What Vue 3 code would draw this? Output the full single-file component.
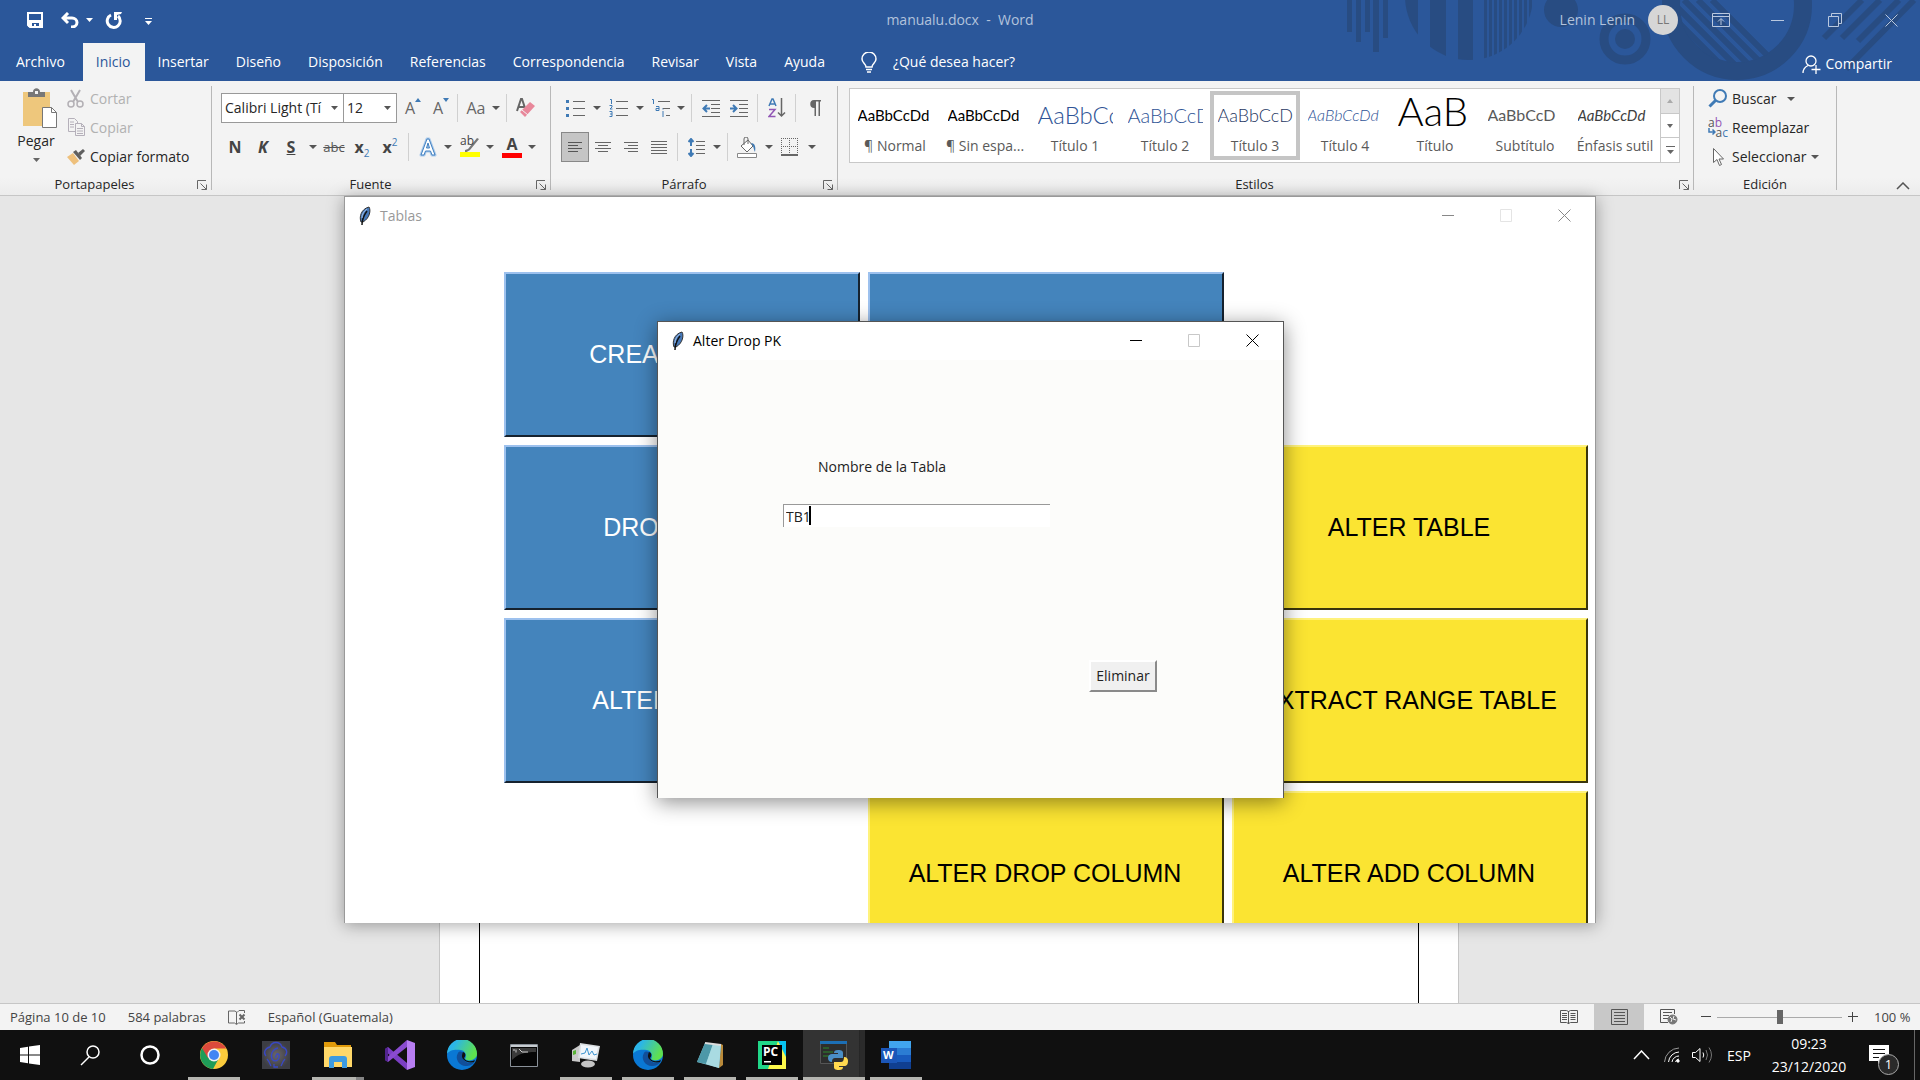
<script setup>
import { ref } from 'vue'

const tabs = ['Archivo', 'Inicio', 'Insertar', 'Diseño', 'Disposición', 'Referencias', 'Correspondencia', 'Revisar', 'Vista', 'Ayuda']
const activeTab = ref('Inicio')

const styles = [
  { name: '¶ Normal', sample: 'AaBbCcDd', cls: 'normal' },
  { name: '¶ Sin espa...', sample: 'AaBbCcDd', cls: 'normal' },
  { name: 'Título 1', sample: 'AaBbCcDd', cls: 'h1' },
  { name: 'Título 2', sample: 'AaBbCcDd', cls: 'h2' },
  { name: 'Título 3', sample: 'AaBbCcDd', cls: 'h3' },
  { name: 'Título 4', sample: 'AaBbCcDd', cls: 'h4' },
  { name: 'Título', sample: 'AaB', cls: 'title' },
  { name: 'Subtítulo', sample: 'AaBbCcD', cls: 'subtitle' },
  { name: 'Énfasis sutil', sample: 'AaBbCcDd', cls: 'emphasis' }
]
const activeStyle = ref('Título 3')

const tiles = [
  { label: 'CREATE TABLE', cls: 'blue c1 r1' },
  { label: '', cls: 'blue c2 r1' },
  { label: 'DROP TABLE', cls: 'blue c1 r2' },
  { label: 'ALTER TABLE', cls: 'yellow c3 r2' },
  { label: 'ALTER ADD PK', cls: 'blue c1 r3' },
  { label: 'EXTRACT RANGE TABLE', cls: 'yellow c3 r3' },
  { label: 'ALTER DROP COLUMN', cls: 'yellow c2 r4' },
  { label: 'ALTER ADD COLUMN', cls: 'yellow c3 r4' }
]

const stripes = Array.from({ length: 10 }, (_, i) => 144 + i * 5)
const table = ref('TB1')
const zoom = ref(50)
</script>

<template>
  <div class="screen">
    <header class="head">
      <svg class="deco" width="580" height="81" viewBox="0 0 580 81" fill="#284c82" aria-hidden="true">
        <defs>
          <clipPath id="disc"><circle cx="129" cy="-4" r="64" /></clipPath>
          <clipPath id="hole"><circle cx="397" cy="5" r="58" /></clipPath>
        </defs>
        <path d="M7 0h5v32h-5zM16 0h5v42h-5zM25 0h5v32h-5zM33 0h6v52h-6zM43 0h5v38h-5z" />
        <g clip-path="url(#disc)">
          <path d="M60 0h18v64h-18zM90 0h16v64h-16zM118 0h15v64h-15z" />
          <rect v-for="x in stripes" :key="x" :x="x" y="0" width="3" height="64" />
        </g>
        <circle cx="221" cy="10" r="17" />
        <circle cx="285" cy="39" r="21" fill="none" stroke="#284c82" stroke-width="9" />
        <circle cx="285" cy="39" r="10" />
        <circle cx="397" cy="5" r="66" fill="none" stroke="#284c82" stroke-width="18" />
        <g clip-path="url(#hole)" stroke="#284c82" stroke-width="6">
          <path d="M330 0l80 80M344 0l80 80M358 0l80 80M372 0l80 80M316 0l80 80" />
        </g>
        <path d="M484 38L522 0M502 38L540 0M518 41L559 0M506 69L574 0" stroke="#284c82" stroke-width="6" />
      </svg>

      <div class="titlebar">
        <div class="quick">
          <button aria-label="Guardar"><svg width="16" height="16" viewBox="0 0 16 16"><path d="M1 1h14v14H3l-2-2z" fill="none" stroke="#fff" stroke-width="2" /><path d="M1 8h14v7h-3v-4H5v4H1z" fill="#fff" /><path d="M7 12h2v3H7z" fill="#fff" /></svg></button>
          <button aria-label="Deshacer"><svg width="18" height="16" viewBox="0 0 18 16"><path d="M7 1L2 6l5 5M3 6h8a5 4.5 0 0 1 0 9h-1" fill="none" stroke="#fff" stroke-width="3" /></svg></button>
          <svg class="drop" width="7" height="4" viewBox="0 0 7 4"><path d="M0 0h7L3.5 4z" fill="#fff" /></svg>
          <button aria-label="Rehacer"><svg width="18" height="17" viewBox="0 0 18 17"><path d="M6 3a6.500 6.500 0 1 0 7 1" fill="none" stroke="#fff" stroke-width="3" /><path d="M9 0h8l-1 2-4 1v5H9z" fill="#fff" /></svg></button>
          <button class="custom" aria-label="Personalizar"><svg width="7" height="7" viewBox="0 0 7 7" fill="#fff"><path d="M0 0h7v1H0zM0 3h7L3.5 7z" /></svg></button>
        </div>
        <div class="doc-name">manualu.docx&nbsp; -&nbsp; Word</div>
        <div class="account">
          <span>Lenin Lenin</span>
          <span class="avatar">LL</span>
          <button class="wc" aria-label="Opciones de la cinta"><svg width="18" height="14" viewBox="0 0 18 14" fill="none" stroke="#b9c8df"><path d="M.5.5h17v13H.5zM.5 3.5h17M9 12V6M6 8.500l3-3 3 3" /></svg></button>
          <button class="wc" aria-label="Minimizar"><svg width="13" height="13" viewBox="0 0 13 13" stroke="#b9c8df"><path d="M0 6.500h13" /></svg></button>
          <button class="wc" aria-label="Restaurar"><svg width="14" height="14" viewBox="0 0 14 14" fill="none" stroke="#b9c8df"><path d="M.5 3.500h10v10H.5zM3.500 3.500v-3h10v10h-3" /></svg></button>
          <button class="wc" aria-label="Cerrar"><svg width="13" height="13" viewBox="0 0 13 13" stroke="#b9c8df"><path d="M.5.5l12 12M12.500.5l-12 12" /></svg></button>
        </div>
      </div>

      <nav class="tabs">
        <button v-for="t in tabs" :key="t" :class="{ on: t === activeTab }" @click="activeTab = t">{{ t }}</button>
        <button class="tell">
          <svg width="16" height="21" viewBox="0 0 16 21" fill="none" stroke="#fff" stroke-width="1.5"><path d="M5 15c0-3-4-4-4-8a7 7 0 0 1 14 0c0 4-4 5-4 8zM5 17.500h6M6 20h4" /></svg>
          ¿Qué desea hacer?
        </button>
        <button class="share">
          <svg width="19" height="19" viewBox="0 0 19 19" fill="none" stroke="#fff" stroke-width="1.3"><circle cx="9" cy="6" r="5" /><path d="M1 18c0-4 2-6 5-7.500M14 10v9M9.500 14.500h9" /></svg>
          Compartir
        </button>
      </nav>
    </header>

    <section class="ribbon">
      <div class="group clip">
        <div class="body">
          <button class="paste">
            <svg class="board" width="36" height="40" viewBox="0 0 36 40"><path d="M1 4h27v34H1z" fill="#eec77c" /><path d="M6 9V4h5c0-5 7-5 7 0h5v5z" fill="#777" /><path d="M13 3h3v3h-3z" fill="#f3f3f3" /><path d="M20.500 19.500h9l5 5v15h-14z" fill="#fff" stroke="#777" /><path d="M29.500 19.500v5h5" fill="none" stroke="#777" /></svg>
            <span>Pegar</span>
            <svg width="7" height="4" viewBox="0 0 7 4"><path d="M0 0h7L3.5 4z" fill="#666" /></svg>
          </button>
          <div class="stack">
            <button class="off"><svg width="18" height="19" viewBox="0 0 18 19" fill="none" stroke="#b3b0b5" stroke-width="2"><path d="M4 1l7 12M13 1L6 13" /><circle cx="4" cy="15" r="3" stroke-width="1.5" /><circle cx="13" cy="15" r="3" stroke-width="1.5" /></svg>Cortar</button>
            <button class="off"><svg width="18" height="19" viewBox="0 0 18 19" fill="#f3f3f3" stroke="#b5b0ba"><path d="M1.500.5h6l3 3v10h-9zM3 4h4M3 6.500h4M3 9h4" /><path d="M8.500 5.500h6l3 3v9h-9zM14.500 5.500v3h3M10 10.500h6M10 13h6M10 15.500h6" /></svg>Copiar</button>
            <button><svg width="18" height="18" viewBox="0 0 18 18"><path d="M0 9l6-4 6 8-5 4z" fill="#eec07c" /><path d="M6 4l3-2 6 8-2 2z" fill="#5f5f5f" /><path d="M11 5l5-4 2 2-5 5z" fill="#5f5f5f" /></svg>Copiar formato</button>
          </div>
        </div>
        <div class="caption"><span>Portapapeles</span><svg class="launch" width="10" height="10" viewBox="0 0 10 10" fill="none" stroke="#666"><path d="M.5 9V.5H9M3.500 3.500l6 6M9.500 4.500v5h-5" /></svg></div>
      </div>

      <div class="group font">
        <div class="body rows">
          <div class="row">
            <label class="combo wide"><select aria-label="Fuente"><option>Calibri Light (Tí</option></select><svg width="7" height="4" viewBox="0 0 7 4"><path d="M0 0h7L3.5 4z" fill="#555" /></svg></label>
            <label class="combo"><select aria-label="Tamaño"><option>12</option></select><svg width="7" height="4" viewBox="0 0 7 4"><path d="M0 0h7L3.5 4z" fill="#555" /></svg></label>
            <button class="ib first" aria-label="Agrandar"><span class="g">A</span><svg class="sup" width="6" height="4" viewBox="0 0 6 4"><path d="M0 4h6L3 0z" fill="#3f7ab5" /></svg></button>
            <button class="ib" aria-label="Reducir"><span class="g">A</span><svg class="sup" width="6" height="4" viewBox="0 0 6 4"><path d="M0 0h6L3 4z" fill="#3f7ab5" /></svg></button>
            <i class="sep tight"></i>
            <button class="ib"><span class="g">Aa</span></button><i class="dd"></i>
            <i class="sep"></i>
            <button class="ib" aria-label="Borrar formato"><svg width="20" height="20" viewBox="0 0 20 20"><path d="M1 13L5 1h1l4 12M2.500 9h6" fill="none" stroke="#666" stroke-width="2" /><path d="M4 14L14 4l5 4L9 19z" fill="#e8879a" /><path d="M6 12l6 5" stroke="#f3f3f3" /></svg></button>
          </div>
          <div class="row">
            <button class="ib"><b>N</b></button>
            <button class="ib"><b><em>K</em></b></button>
            <button class="ib"><b><u>S</u></b></button><i class="dd big"></i>
            <button class="ib"><s>abc</s></button>
            <button class="ib"><b>x</b><sub>2</sub></button>
            <button class="ib"><b>x</b><sup>2</sup></button>
            <i class="sep"></i>
            <button class="ib" aria-label="Efectos de texto"><svg width="18" height="20" viewBox="0 0 18 20" fill="none" stroke-linejoin="round"><path d="M2 18L8 2h2l6 16h-3l-1.500-4h-5L5 18zM7.500 11h3L9 6z" stroke="#a9c9ea" stroke-width="3" /><path d="M2 18L8 2h2l6 16h-3l-1.500-4h-5L5 18zM7.500 11h3L9 6z" fill="#fff" stroke="#3f7fc0" /></svg></button><i class="dd"></i>
            <button class="ib hl" aria-label="Resaltado"><span>ab</span><svg width="20" height="20" viewBox="0 0 20 20"><path d="M5 13l3-1L17 1l2 1-9 11-5 3z" fill="#777" /><path d="M0 15h20v5H0z" fill="#ff0" /></svg></button><i class="dd"></i>
            <button class="ib col"><b>A</b><span class="red"></span></button><i class="dd"></i>
          </div>
        </div>
        <div class="caption"><span>Fuente</span><svg class="launch" width="10" height="10" viewBox="0 0 10 10" fill="none" stroke="#666"><path d="M.5 9V.5H9M3.500 3.500l6 6M9.500 4.500v5h-5" /></svg></div>
      </div>

      <div class="group para">
        <div class="body rows">
          <div class="row">
            <button class="ib" aria-label="Viñetas"><svg width="19" height="18" viewBox="0 0 19 18"><path d="M0 1h3v3H0zM0 8h3v3H0zM0 15h3v3H0z" fill="#3f7ab5" /><path d="M7 2h12v1H7zM7 9h12v1H7zM7 16h12v1H7z" fill="#666" /></svg></button><i class="dd big"></i>
            <button class="ib" aria-label="Numeración"><svg width="19" height="18" viewBox="0 0 19 18"><path d="M1 .5h1.500V5M.5 6.500h2.500v1.500l-2 2h2.500M.5 12.500H3v5H.5M1 15h2" fill="none" stroke="#3f7ab5" /><path d="M7 2h12v1H7zM7 9h12v1H7zM7 16h12v1H7z" fill="#666" /></svg></button><i class="dd big"></i>
            <button class="ib" aria-label="Multinivel"><svg width="20" height="18" viewBox="0 0 20 18"><path d="M1 .5h1.500V5M5 7.500h3v4H5v-2h3M12 12v6M12 9v1.500" fill="none" stroke="#3f7ab5" /><path d="M7 2h12v1H7zM12 9h7v1h-7zM15 16h4v1h-4z" fill="#666" /></svg></button><i class="dd"></i>
            <i class="sep"></i>
            <button class="ib" aria-label="Disminuir sangría"><svg width="18" height="17" viewBox="0 0 18 17"><path d="M0 0h18v1H0zM9 4h9v1H9zM9 8h9v1H9zM9 12h9v1H9zM0 16h18v1H0z" fill="#666" /><path d="M8 8.500H2M5 5L1.500 8.500 5 12" fill="none" stroke="#3f7ab5" stroke-width="2" /></svg></button>
            <button class="ib" aria-label="Aumentar sangría"><svg width="18" height="17" viewBox="0 0 18 17"><path d="M0 0h18v1H0zM9 4h9v1H9zM9 8h9v1H9zM9 12h9v1H9zM0 16h18v1H0z" fill="#666" /><path d="M0 8.500h6M3 5l3.500 3.500L3 12" fill="none" stroke="#3f7ab5" stroke-width="2" /></svg></button>
            <i class="sep"></i>
            <button class="ib" aria-label="Ordenar"><svg width="18" height="20" viewBox="0 0 18 20" fill="none"><path d="M1 8L4 1h1l3 7M2 6h5" stroke="#3f7ab5" stroke-width="1.5" /><path d="M1 11.500h6L1 18.500h6.500" stroke="#9156b5" stroke-width="1.5" /><path d="M13.500 0v18M10 14.500l3.500 3.500 3.500-3.500" stroke="#666" stroke-width="1.5" /></svg></button>
            <i class="sep"></i>
            <button class="ib" aria-label="Mostrar todo"><svg width="12" height="16" viewBox="0 0 12 16"><path d="M5 0h7v1.500h-1V16H9.500V1.500H7V16H5.500V8a4 4 0 0 1-.5-8z" fill="#666" /></svg></button>
          </div>
          <div class="row">
            <button class="ib pressed" aria-label="Izquierda"><svg width="16" height="13" viewBox="0 0 16 13"><path d="M1 1.500h14M1 4.500h10M1 7.500h14M1 10.500h10" stroke="#555" /></svg></button>
            <button class="ib" aria-label="Centrar"><svg width="16" height="13" viewBox="0 0 16 13"><path d="M0 1.500h16M3 4.500h10M0 7.500h16M3 10.500h10" stroke="#666" /></svg></button>
            <button class="ib" aria-label="Derecha"><svg width="16" height="13" viewBox="0 0 16 13"><path d="M1 1.500h14M5 4.500h10M1 7.500h14M5 10.500h10" stroke="#666" /></svg></button>
            <button class="ib" aria-label="Justificar"><svg width="16" height="15" viewBox="0 0 16 15"><path d="M0 1.500h16M0 4.500h16M0 7.500h16M0 10.500h16M0 13.500h16" stroke="#666" /></svg></button>
            <i class="sep"></i>
            <button class="ib" aria-label="Interlineado"><svg width="18" height="19" viewBox="0 0 18 19" fill="none"><path d="M3 1v7M.5 4L3 1l2.500 3M3 11v7M.5 15L3 18l2.500-3" stroke="#3f7ab5" stroke-width="2" /><path d="M8 3.500h9M8 7.500h9M8 11.500h9M8 15.500h9" stroke="#666" /></svg></button><i class="dd"></i>
            <i class="sep"></i>
            <button class="ib" aria-label="Sombreado"><svg width="20" height="21" viewBox="0 0 20 21"><path d="M.5 16.500h19v4H.5z" fill="#fff" stroke="#888" /><path d="M4 9l7-6 5 6-6 6z" fill="#fff" stroke="#666" /><path d="M7 8V2a2 2 0 0 1 4 0v5" fill="none" stroke="#666" /><path d="M14 6c4 0 5 4 4 9-1-2-1-3-2-6z" fill="#3f7ab5" /></svg></button><i class="dd big"></i>
            <button class="ib" aria-label="Bordes"><svg width="18" height="18" viewBox="0 0 18 18" fill="none" stroke="#666"><path d="M.5 0v17M8.500 0v17M16.500 0v17M0 .5h17M0 8.500h17" stroke-dasharray="1 1" /><path d="M0 17h17" stroke-width="2" /></svg></button><i class="dd big"></i>
          </div>
        </div>
        <div class="caption"><span>Párrafo</span><svg class="launch" width="10" height="10" viewBox="0 0 10 10" fill="none" stroke="#666"><path d="M.5 9V.5H9M3.500 3.500l6 6M9.500 4.500v5h-5" /></svg></div>
      </div>

      <div class="group styles">
        <div class="body">
          <div class="gallery">
            <button v-for="s in styles" :key="s.name" :class="['style', { on: s.name === activeStyle }]" @click="activeStyle = s.name">
              <span :class="['sample', s.cls]">{{ s.sample }}</span>
              <span class="name">{{ s.name }}</span>
            </button>
            <div class="scroll">
              <button class="dim" aria-label="Arriba"><svg width="6" height="4" viewBox="0 0 6 4"><path d="M0 4h6L3 0z" fill="#aaa" /></svg></button>
              <button aria-label="Abajo"><svg width="6" height="4" viewBox="0 0 6 4"><path d="M0 0h6L3 4z" fill="#666" /></svg></button>
              <button aria-label="Más"><svg width="9" height="9" viewBox="0 0 9 9" fill="#666"><path d="M0 0h9v1H0zM1 4h7L4.500 8z" /></svg></button>
            </div>
          </div>
        </div>
        <div class="caption"><span>Estilos</span><svg class="launch" width="10" height="10" viewBox="0 0 10 10" fill="none" stroke="#666"><path d="M.5 9V.5H9M3.500 3.500l6 6M9.500 4.500v5h-5" /></svg></div>
      </div>

      <div class="group edit">
        <div class="body">
          <div class="stack">
            <button><svg width="20" height="19" viewBox="0 0 20 19" fill="none" stroke="#3f7ab5"><circle cx="12" cy="7" r="6" stroke-width="2" /><path d="M7.500 11.500L1.500 17.500" stroke-width="3" /></svg>Buscar<i class="dd find"></i></button>
            <button><span class="swap"><span>a<span class="p">b</span></span><span><svg width="8" height="8" viewBox="0 0 8 8" fill="none" stroke="#3f7ab5" stroke-width="1.5"><path d="M1 0v4h6M4.500 1.500L7 4 4.500 6.500" /></svg>a<span class="c">c</span></span></span>Reemplazar</button>
            <button><svg width="20" height="19" viewBox="0 0 20 19" fill="#fff" stroke="#666"><path d="M5.500 1.500v14l3.500-3 2.500 6 2-1-2.500-5.500h4.500z" /></svg>Seleccionar<i class="dd"></i></button>
          </div>
        </div>
        <div class="caption"><span>Edición</span></div>
      </div>

      <button class="collapse" aria-label="Contraer la cinta"><svg width="14" height="8" viewBox="0 0 14 8" fill="none" stroke="#555" stroke-width="1.5"><path d="M1 7l6-6 6 6" /></svg></button>
    </section>

    <main class="desk">
      <div class="page"><div class="frame"><i class="pic b"></i><i class="pic y"></i></div></div>

      <section class="win tablas">
        <div class="bar">
          <svg class="feather" width="12" height="20" viewBox="0 0 12 20"><path d="M2 16C0 11 2 3 10 1c2 3 1 11-6 15z" fill="#4678b8" stroke="#333" /><path d="M3 19c0-6 2-10 5-14" fill="none" stroke="#111" stroke-width="1.5" /><path d="M3 12c0-4 2-7 5-9" fill="none" stroke="#9dbde8" /></svg>
          <span>Tablas</span>
          <button aria-label="Minimizar"><svg width="13" height="13" viewBox="0 0 13 13" stroke="#888"><path d="M0 6.500h12" /></svg></button>
          <button aria-label="Maximizar"><svg width="13" height="13" viewBox="0 0 13 13" fill="none" stroke="#e4e4e4"><path d="M.5.5h11v12H.5z" /></svg></button>
          <button aria-label="Cerrar"><svg width="13" height="13" viewBox="0 0 13 13" stroke="#888"><path d="M.5.5l12 12M12.500.5l-12 12" /></svg></button>
        </div>
        <div class="grid">
          <button v-for="(t, i) in tiles" :key="i" :class="['tile', t.cls]">{{ t.label }}</button>
        </div>
      </section>

      <section class="win dialog">
        <div class="bar">
          <svg class="feather" width="12" height="20" viewBox="0 0 12 20"><path d="M2 16C0 11 2 3 10 1c2 3 1 11-6 15z" fill="#4678b8" stroke="#333" /><path d="M3 19c0-6 2-10 5-14" fill="none" stroke="#111" stroke-width="1.5" /><path d="M3 12c0-4 2-7 5-9" fill="none" stroke="#9dbde8" /></svg>
          <span>Alter Drop PK</span>
          <button aria-label="Minimizar"><svg width="13" height="13" viewBox="0 0 13 13" stroke="#000"><path d="M0 6.500h12" /></svg></button>
          <button aria-label="Maximizar"><svg width="13" height="13" viewBox="0 0 13 13" fill="none" stroke="#c8c8c8"><path d="M.5.5h11v12H.5z" /></svg></button>
          <button aria-label="Cerrar"><svg width="13" height="13" viewBox="0 0 13 13" stroke="#000"><path d="M.5.5l12 12M12.500.5l-12 12" /></svg></button>
        </div>
        <form class="form" @submit.prevent>
          <label for="tabla">Nombre de la Tabla</label>
          <div class="entry"><input id="tabla" v-model="table" type="text" /><i class="cursor"></i></div>
          <button class="drop-btn" type="submit">Eliminar</button>
        </form>
      </section>
    </main>

    <footer class="status">
      <span>Página 10 de 10</span>
      <span>584 palabras</span>
      <svg width="18" height="16" viewBox="0 0 18 16" fill="none" stroke="#666"><path d="M16.500 4V1.500H11l-2 2-2-1.500H.5v12h6l2 1.500 2-1.500h6V12M8.500 3v12" /><path d="M11.500 5.500l5 5M16.500 5.500l-5 5" stroke-width="2" /></svg>
      <span>Español (Guatemala)</span>
      <div class="views">
        <button aria-label="Modo de lectura"><svg width="18" height="16" viewBox="0 0 18 16" fill="none" stroke="#555"><path d="M.5 1.500h6l2 1 2-1h7v12h-7l-2 1-2-1h-6zM8.500 2v13M2 4.500h5M2 6.500h5M2 8.500h5M2 10.500h5M10.500 4.500h5M10.500 6.500h5M10.500 8.500h5M10.500 10.500h5" /></svg></button>
        <button class="on" aria-label="Diseño de impresión"><svg width="17" height="16" viewBox="0 0 17 16" fill="none" stroke="#555"><path d="M.5.5h16v15H.5zM3 3.500h11M3 6.500h11M3 9.500h11M3 12.500h11" /></svg></button>
        <button aria-label="Diseño web"><svg width="18" height="16" viewBox="0 0 18 16" fill="none" stroke="#555"><path d="M8 13.500H.5V.5h14V5M3 3.500h9M3 6.500h6M3 9.500h5" /><circle cx="12.500" cy="10.500" r="4.500" fill="#777" stroke="#777" /><path d="M10 8l2 2-1 3M14 7l-1 3 3 1" stroke="#eee" /></svg></button>
        <div class="zoom-box">
          <button aria-label="Alejar"><svg width="10" height="10" viewBox="0 0 10 10" stroke="#444"><path d="M0 4.500h10" /></svg></button>
          <input v-model="zoom" class="zoom" type="range" min="0" max="100" aria-label="Zoom" />
          <button aria-label="Acercar"><svg width="10" height="10" viewBox="0 0 10 10" stroke="#444"><path d="M0 4.500h10M4.500 0v10" /></svg></button>
          <span class="pct">100 %</span>
        </div>
      </div>
    </footer>

    <nav class="taskbar">
      <button class="sys" aria-label="Inicio"><svg width="20" height="20" viewBox="0 0 20 20" fill="#fff"><path d="M0 3l8-1.200V9.500H0zM9 1.600L20 0v9.500H9zM0 10.500h8v7.700L0 17zM9 10.500h11V20L9 18.400z" /></svg></button>
      <button class="sys" aria-label="Buscar"><svg width="21" height="21" viewBox="0 0 21 21" fill="none" stroke="#fff" stroke-width="1.5"><circle cx="13" cy="7" r="6" /><path d="M9 12L1 20" /></svg></button>
      <button class="sys" aria-label="Cortana"><svg width="20" height="20" viewBox="0 0 20 20"><circle cx="10" cy="10" r="8.5" fill="none" stroke="#fff" stroke-width="2.5" /></svg></button>

      <button class="app run" aria-label="Chrome"><svg width="28" height="28" viewBox="0 0 28 28"><circle cx="14" cy="14" r="14" fill="#fbcb3c" /><path d="M2 7a14 14 0 0 0 11 21l6-11-5-3z" fill="#1f9d58" /><path d="M2 7l6 10 6-9.500h12.200A14 14 0 0 0 2 7z" fill="#dc4a3c" /><circle cx="14" cy="14" r="6.5" fill="#f1f1f1" /><circle cx="14" cy="14" r="5" fill="#4285f4" /></svg></button>
      <button class="app" aria-label="Dragon"><svg width="28" height="28" viewBox="0 0 28 28"><defs><radialGradient id="dg"><stop offset="0" stop-color="#6a6668" /><stop offset="1" stop-color="#3c3d44" /></radialGradient></defs><path d="M0 0h28v28H0z" fill="url(#dg)" /><path d="M16 7c-5 1-8 6-6 11 3 4 8 1 7-4-1-3-4 0-3 3M8 6c2-6 10-6 12 0 5 1 6 6 3 9M8 6c-5 1-7 6-4 9M5 18c2 2 3 5 4 7M23 18c-2 2-3 5-4 7M12 23v3h4" fill="none" stroke="#3948c4" stroke-width="1.3" /></svg></button>
      <button class="app run multi" aria-label="Explorador"><svg width="28" height="26" viewBox="0 0 28 26"><path d="M0 0h11l2 3h14v7H0z" fill="#e09a0a" /><path d="M0 5h28v20H0z" fill="#ffd869" /><path d="M5 26v-9q0-3 3-3h12q3 0 3 3v9h-5v-6h-8v6z" fill="#3d9be0" /></svg></button>
      <button class="app" aria-label="Visual Studio"><svg width="30" height="30" viewBox="0 0 30 30"><path d="M0 9l3-2 19 16v7L0 11z" fill="#7b3fc4" /><path d="M0 20l3 2L22 7V0L0 19z" fill="#8a4bd0" /><path d="M22 0l8 3v24l-8 3z" fill="#b77df2" /><path d="M0 9v11l3 2V7z" fill="#52248f" /></svg></button>
      <button class="app" aria-label="Edge"><svg width="30" height="30" viewBox="0 0 30 30"><defs><linearGradient id="eg" x1="0" x2="1" y2=".4"><stop offset=".3" stop-color="#2bb5e8" /><stop offset="1" stop-color="#5fe04f" /></linearGradient></defs><circle cx="15" cy="15" r="15" fill="#0a78d4" /><path d="M0 14A15 15 0 0 1 30 14c0 6-9 8-12 5 2-3 1-8-4-9-6-1-12 0-14 4z" fill="url(#eg)" /><path d="M11 13c-4 6 2 14 9 13 4 0 7-3 8-5-4 3-10 2-12-2-1-2 1-3 1-5-1-3-5-3-6-1z" fill="#114f9a" /><path d="M16 12c3 1 3 4 1 6 2 4 7 4 11 2l-1 2c-4 1-8 0-10-2-3-3-2-5-1-8z" fill="#101010" /></svg></button>
      <button class="app" aria-label="Consola"><svg width="28" height="23" viewBox="0 0 28 23"><path d="M.5.5h27v22H.5z" fill="#060606" stroke="#8a9199" /><path d="M1 1h26v2H1z" fill="#c7ccd1" /><path d="M2 4h24v4C14 8 8 10 2 16z" fill="#3a3a3a" /><path d="M3 6h2M6 5.500v3M9 5l3 3h6" fill="none" stroke="#ccc" /></svg></button>
      <button class="app run" aria-label="Monitor"><svg width="28" height="26" viewBox="0 0 28 26"><path d="M0 8l8-5v17l-8-1z" fill="#c9c9c9" /><path d="M1 9l3-1v4l-3 1z" fill="#58b336" /><path d="M8 1l20 3-3 15-19-3z" fill="#d9dde0" /><path d="M9 3l17 2-2 12-16-2z" fill="#f1f6fb" /><path d="M9 12l4-1 2-5 2 7 3-4 2 4 3-1" fill="none" stroke="#3d94cf" /><ellipse cx="16" cy="22" rx="7" ry="3.5" fill="#c5c5c5" /></svg></button>
      <button class="app run" aria-label="Edge Beta"><svg width="30" height="30" viewBox="0 0 30 30"><circle cx="15" cy="15" r="15" fill="#0a78d4" /><path d="M0 14A15 15 0 0 1 30 14c0 6-9 8-12 5 2-3 1-8-4-9-6-1-12 0-14 4z" fill="url(#eg)" /><path d="M11 13c-4 6 2 14 9 13 4 0 7-3 8-5-4 3-10 2-12-2-1-2 1-3 1-5-1-3-5-3-6-1z" fill="#114f9a" /><path d="M16 12c3 1 3 4 1 6 2 4 7 4 11 2l-1 2c-4 1-8 0-10-2-3-3-2-5-1-8z" fill="#101010" /></svg></button>
      <button class="app run" aria-label="Bloc de notas"><svg width="28" height="27" viewBox="0 0 28 27"><path d="M25 2l2 1v20l-4 3z" fill="#b98a3a" /><path d="M9 1l16 2-2 23-22-6z" fill="#8fcbd6" /><path d="M9 1L1 20l9 2L17 2z" fill="#4d98a8" /><path d="M17 2l-7 20 13 4 2-23z" fill="#a9dbe2" /><path d="M9 1l16 2" stroke="#ddd" stroke-width="2" /></svg></button>
      <button class="app run" aria-label="PyCharm"><svg width="28" height="28" viewBox="0 0 28 28"><path d="M0 0h28v28H0z" fill="#21d789" /><path d="M10 28h18V6L20 0z" fill="#fcf84a" /><path d="M20 0h8v16z" fill="#07c3f2" /><path d="M4 4h20v20H4z" /><path d="M6 20h7v1.500H6z" fill="#fff" /><text x="5" y="15" fill="#fff" font-family="Open Sans, sans-serif" font-weight="700" font-size="12">PC</text></svg></button>
      <button class="app run active" aria-label="Python"><svg width="30" height="30" viewBox="0 0 30 30"><path d="M1.500 2.500h26v21h-26z" fill="#2d2d2d" stroke="#555" /><path d="M1 1h27v3H1z" fill="#1c6fb5" /><path d="M4 8h6M4 12h10M4 16h6" stroke="#2c8a2c" /><path d="M19 10c4 0 5 1 5 3v5h-8c-2 0-3 1-3 4-3 0-4-2-4-4 0-3 2-4 4-4h6v-1h-4c0-2 1-3 4-3z" fill="#4a8fc7" /><path d="M20 30c-4 0-5-1-5-3v-5h7c2 0 3-2 3-5 3 0 4 2 4 4 0 3-1 5-4 5h-5v1h4c0 2-1 3-4 3z" fill="#ffd94f" /></svg></button>
      <button class="app run" aria-label="Word"><svg width="30" height="28" viewBox="0 0 30 28"><path d="M8 0h22v7H8z" fill="#41a5ee" /><path d="M8 7h22v7H8z" fill="#2b7cd3" /><path d="M8 14h22v7H8z" fill="#185abd" /><path d="M8 21h22v7H8z" fill="#103f91" /><path d="M0 7h16v15H0z" fill="#1b56b8" /><text x="2" y="18" fill="#fff" font-family="Open Sans, sans-serif" font-weight="700" font-size="11">W</text></svg></button>

      <div class="tray">
        <svg width="17" height="10" viewBox="0 0 17 10" fill="none" stroke="#fff" stroke-width="1.5"><path d="M1 9l7.500-8L16 9" /></svg>
        <svg class="wifi" width="16" height="16" viewBox="0 0 16 16" fill="none" stroke="#fff"><path d="M.5 15A15 15 0 0 1 15 1" stroke="#999" /><path d="M4.500 15A11 11 0 0 1 15 5M8 15a7 7 0 0 1 7-6M11.500 15a4 4 0 0 1 3.500-3" /><path d="M13 13h2v2h-2z" fill="#fff" /></svg>
        <svg width="21" height="18" viewBox="0 0 21 18" fill="none" stroke="#fff"><path d="M.5 6.500h3L8 2.500v13l-4.500-4H.5z" /><path d="M11 6.500q1.500 2.500 0 5" /><path d="M14 4q3 5 0 10M17 1.500q5 7.500 0 15" stroke="#777" /></svg>
        <span class="lang">ESP</span>
        <div class="clock"><span>09:23</span><span>23/12/2020</span></div>
        <button class="note" aria-label="Notificaciones"><svg width="20" height="20" viewBox="0 0 20 20"><path d="M0 0h20v16h-8l-3 3v-3H0z" fill="#fff" /><path d="M4 4.500h12M4 8.500h12M4 12.500h6" stroke="#111" /></svg><span class="badge">1</span></button>
        <i class="peek"></i>
      </div>
    </nav>
  </div>
</template>

<style>
body { margin: 0; }
</style>

<style scoped>
.screen { min-height: 100vh; display: flex; flex-direction: column; font: 14px/20px "Open Sans", "Noto Sans", sans-serif; color: #262626; overflow: hidden; }
.screen * { box-sizing: border-box; }
button { font: inherit; color: inherit; background: none; border: 0; padding: 0; display: flex; align-items: center; justify-content: center; }
svg { display: block; flex: none; }
span { white-space: nowrap; }

.head { position: relative; background: #2b579a; color: #fff; }
.deco { position: absolute; right: 0; top: 0; }
.titlebar { position: relative; display: grid; grid-template-columns: 1fr auto 1fr; align-items: center; height: 40px; color: #b3c3dc; }
.quick { display: flex; align-items: center; padding-left: 27px; }
.quick button:nth-of-type(2) { margin-left: 18px; }
.quick .drop { margin: 0 12px 0 7px; }
.quick .custom { margin: 3px 0 0 22px; }
.account { display: flex; justify-content: flex-end; align-items: center; }
.avatar { width: 30px; height: 30px; border-radius: 50%; background: #d6d6d6; color: #777; font-size: 12px; line-height: 30px; text-align: center; margin: 0 14px 0 13px; }
.wc { width: 57px; height: 38px; }
.tabs { position: relative; display: flex; margin-top: 3px; height: 38px; }
.tabs button { padding: 0 14px 0 13px; }
.tabs button:first-child { padding: 0 18px 0 16px; }
.tabs .on { background: #f3f3f3; color: #2b579a; }
.tabs .tell { padding-left: 22px; gap: 16px; }
.tabs .share { margin-left: auto; padding: 4px 28px 0 0; gap: 4px; }

.ribbon { display: flex; height: 115px; padding-top: 5px; background: linear-gradient(#f3f3f3 85%, #ececec); border-bottom: 1px solid #c6c6c6; }
.group { display: flex; flex-direction: column; border-right: 1px solid #b8b8b8; height: 104px; }
.body { display: flex; height: 88px; }
.caption { position: relative; display: flex; justify-content: center; font-size: 13px; line-height: 16px; height: 16px; }
.launch { position: absolute; right: 4px; top: 6px; }
.caption span { padding-top: 2px; }
.clip { width: 212px; }
.clip .caption { padding-right: 22px; }
.paste { flex-direction: column; justify-content: flex-start; width: 40px; margin: 2px 11px 0 16px; }
.paste .board { align-self: flex-end; margin-right: -2px; }
.paste span { margin: 3px 0 7px; }
.stack { display: flex; flex-direction: column; margin-top: -2px; }
.stack button { height: 29px; gap: 5px; justify-content: flex-start; }
.off { color: #b1b1b1; }
.font { width: 339px; padding-left: 9px; }
.font .caption { padding-right: 30px; }
.para { width: 287px; padding-left: 10px; }
.para .caption { padding-right: 30px; }
.rows { flex-direction: column; gap: 9px; padding-top: 7px; }
.row { display: flex; align-items: center; height: 30px; }
.combo { position: relative; width: 54px; height: 30px; }
.combo.wide { width: 123px; margin-right: -1px; }
.combo select { appearance: none; width: 100%; height: 100%; border: 1px solid #999; border-radius: 0; background: #fff; font: inherit; color: #262626; padding: 0 14px 0 3px; }
.combo svg { position: absolute; right: 6px; top: 13px; }
.ib { position: relative; width: 28px; height: 30px; color: #444; }
.ib.first { margin-left: 2px; }
.ib b { font-size: 16px; }
.ib .g { font-size: 16px; color: #666; }
.ib .sup { align-self: flex-start; margin-top: 5px; }
.ib s { font-size: 13px; color: #555; }
.ib sub, .ib sup { font-size: 10px; line-height: 10px; color: #3f7ab5; }
.ib sub { align-self: flex-end; margin-bottom: 4px; }
.ib sup { align-self: flex-start; margin-top: 5px; }
.pressed { background: #c5c5c5; border: 1px solid #888; }
.hl, .col { margin-left: 2px; }
.hl span { position: absolute; left: 4px; top: 1px; font-size: 12px; line-height: 16px; }
.col { flex-direction: column; }
.col b { line-height: 16px; }
.red { width: 20px; height: 5px; background: #f00; margin-top: 1px; }
.sep { width: 1px; height: 28px; margin: 0 5px 0 4px; background: #d0d0d0; }
.sep.tight { margin: 0 4px 0 2px; }
.dd { width: 12px; display: flex; justify-content: center; }
.dd.big { width: 15px; }
.dd::before { content: ""; border: solid transparent; border-width: 4px 4px 0; border-top-color: #555; }
.styles { flex: 1; }
.styles .body { padding: 2px 0 0 11px; }
.styles .caption { padding-right: 22px; }
.gallery { display: flex; border: 1px solid #c8c8c8; background: #fff; height: 75px; }
.style { width: 90px; flex-direction: column; justify-content: flex-start; border: 4px solid transparent; margin: 2px 0; }
.style.on { border-color: #c5c5c5; }
.sample { width: 75px; height: 42px; line-height: 40px; overflow: hidden; font-family: Lato, "Open Sans", sans-serif; font-weight: 300; text-align: left; font-size: 16px; color: #2f5496; }
.normal { font-weight: 400; font-size: 15px; color: #000; }
.h1 { font-size: 24px; }
.h2 { font-size: 20px; }
.h3 { font-size: 18px; color: #1f3763; }
.h4 { font-style: italic; }
.title { font-size: 40px; line-height: 32px; color: #000; }
.subtitle { font-weight: 400; color: #5a5a5a; }
.emphasis { font-weight: 400; font-size: 15px; font-style: italic; color: #404040; }
.name { color: #5a5a5a; line-height: 18px; }
.scroll { width: 19px; display: flex; flex-direction: column; border-left: 1px solid #c8c8c8; }
.scroll button { flex: 1; border-bottom: 1px solid #c8c8c8; }
.scroll button:last-child { border-bottom: 0; }
.scroll .dim { background: #e3e3e3; }
.edit { width: 143px; }
.edit .body { padding-left: 14px; }
.edit .stack button { gap: 4px; }
.edit .dd { margin-left: -1px; }
.edit .find { margin-left: 4px; }
.swap { width: 20px; font-size: 12px; line-height: 10px; color: #555; }
.swap > span { display: flex; justify-content: flex-end; }
.swap > span:first-child { justify-content: flex-start; }
.p { color: #9156b5; }
.c { color: #3f7ab5; }
.collapse { width: 83px; align-items: flex-end; justify-content: flex-end; padding: 0 10px 5px 0; }

.desk { position: relative; flex: 1; display: flex; justify-content: center; padding-right: 22px; background: #e6e6e6; }
.page { width: 1020px; display: flex; background: #fff; border: solid #c6c6c6; border-width: 0 1px; padding: 0 39px; }
.frame { flex: 1; display: flex; border: solid #000; border-width: 0 1px; }
.pic { height: 1px; width: 59px; margin-left: 292px; background: #39729a; }
.pic.y { width: 112px; margin-left: 240px; background: #8d8430; }
.win { position: absolute; display: flex; flex-direction: column; background: #fff; border: 1px solid #999; border-bottom: 0; }
.tablas { left: 344px; top: 0; width: 1252px; height: 727px; color: #999; box-shadow: 0 2px 16px rgba(0, 0, 0, .35); }
.dialog { left: 657px; top: 125px; width: 627px; height: 477px; border-color: #555; color: #000; box-shadow: 0 4px 20px rgba(0, 0, 0, .45); }
.bar { display: flex; align-items: center; height: 38px; flex: none; padding-right: 2px; }
.feather { margin: 0 9px 0 14px; }
.bar span { flex: 1; }
.bar button { width: 58px; height: 36px; align-self: flex-start; }
.grid { flex: 1; overflow: hidden; display: grid; grid-template-columns: repeat(3, 356px); grid-auto-rows: 165px; gap: 8px; justify-content: end; padding: 37px 7px 0 0; }
.tile { border: 2px solid; padding: 0 2px 2px 0; font: 25px/30px "Liberation Sans", Arial, sans-serif; }
.blue { background: #4484bc; color: #fff; border-color: #9dc1ee #16222e #16222e #9dc1ee; }
.yellow { background: #fbe432; color: #000; border-color: #fff27c #3a350c #3a350c #fff27c; }
.c1 { grid-column: 1; }
.c2 { grid-column: 2; }
.c3 { grid-column: 3; }
.r1 { grid-row: 1; }
.r2 { grid-row: 2; }
.r3 { grid-row: 3; }
.r4 { grid-row: 4; }
.form { flex: 1; display: flex; flex-direction: column; align-items: flex-start; background: #fcfcfa; padding: 97px 126px 0 125px; }
.form label { margin-left: 35px; color: #222; }
.entry { position: relative; margin-top: 27px; }
.entry input { width: 267px; height: 23px; border: solid #999; border-width: 1px 0 0 1px; background: #fff; font: inherit; color: #222; padding: 0 2px; display: block; outline: 0; }
.cursor { position: absolute; left: 26px; top: 2px; width: 2px; height: 19px; background: #000; }
.drop-btn { align-self: flex-end; margin-top: 133px; width: 68px; height: 32px; background: #f0f0f0; border: 2px solid; border-color: #fff #8a8a8a #8a8a8a #fff; color: #222; }

.status { display: flex; align-items: center; height: 27px; background: #f3f3f3; border-top: 1px solid #c6c6c6; padding-left: 10px; font-size: 13px; color: #444; gap: 22px; }
.views { display: flex; margin-left: auto; align-self: stretch; }
.views > button { width: 50px; }
.views .on { background: #c8c8c8; }
.zoom-box { display: flex; align-items: center; gap: 6px; padding: 0 5px 0 7px; }
.zoom { appearance: none; width: 125px; height: 14px; margin: 0; background: linear-gradient(#aaa, #aaa) center / 100% 1px no-repeat; }
.zoom::-webkit-slider-thumb { appearance: none; width: 6px; height: 14px; background: #666; }
.pct { width: 51px; padding-left: 10px; }

.taskbar { display: flex; height: 50px; background: #101010; color: #fff; }
.sys { width: 60px; }
.sys:nth-child(3) { margin-right: 3px; }
.app { width: 52px; margin: 0 5px; padding-top: 3px; border-bottom: 3px solid transparent; }
.run { border-color: #b5b5b0; }
.multi { border-image: linear-gradient(90deg, #b5b5b0 80%, #858585 80%) 3; border-style: solid; border-width: 0 0 3px; }
.active { width: 62px; margin: 0; background: linear-gradient(90deg, #333 56px, #222 56px, #2b2b2b 57px); }
.tray { display: flex; align-items: center; margin-left: auto; }
.wifi { margin: 0 12px 0 14px; }
.lang { margin: 2px 16px 0 14px; width: 26px; }
.clock { display: flex; flex-direction: column; align-items: center; width: 80px; line-height: 23px; }
.note { position: relative; margin: 0 25px 0 20px; }
.badge { position: absolute; left: 9px; top: 9px; width: 21px; height: 21px; border: 1px solid #aaa; border-radius: 50%; background: #2a2a2a; font-size: 13px; line-height: 19px; text-align: center; }
.peek { width: 6px; height: 50px; border-left: 1px solid #666; }
</style>
